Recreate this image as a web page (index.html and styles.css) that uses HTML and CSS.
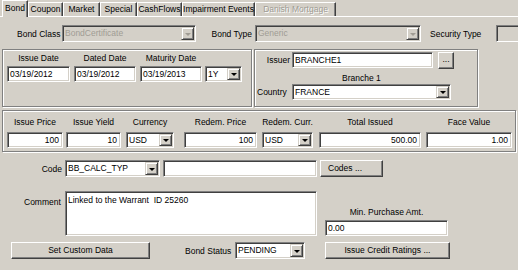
FILE: index.html
```html
<!DOCTYPE html>
<html>
<head>
  <link rel="stylesheet" href="styles.css">
</head>
<body>

<div class="tabs">
  <span class="tab active t-bond">Bond</span>
  <span class="tab t-coupon">Coupon</span>
  <span class="tab t-market">Market</span>
  <span class="tab t-special">Special</span>
  <span class="tab t-cash">CashFlows</span>
  <span class="tab t-impair">Impairment Events</span>
  <span class="tab off t-danish">Danish Mortgage</span>
</div>

<div class="page">

  <div class="row top-row">
    <span class="lbl lbl-bondclass">Bond Class</span>
    <div class="combo off f-bondclass"><span class="val">BondCertificate</span><span class="drop"></span></div>
    <span class="lbl lbl-bondtype">Bond Type</span>
    <div class="combo off f-bondtype"><span class="val">Generic</span><span class="drop"></span></div>
    <span class="lbl lbl-sectype">Security Type</span>
    <div class="box f-sectype"></div>
  </div>

  <div class="row groups">
    <div class="group g-dates">
      <div class="dates">
        <span class="cap">Issue Date</span>
        <span class="cap">Dated Date</span>
        <span class="cap">Maturity Date</span>
        <span></span>
        <div class="box"><span class="val">03/19/2012</span></div>
        <div class="box"><span class="val">03/19/2012</span></div>
        <div class="box"><span class="val">03/19/2013</span></div>
        <div class="combo"><span class="val">1Y</span><span class="drop"></span></div>
      </div>
    </div>

    <div class="group g-issuer">
      <div class="row issuer-row">
        <span class="lbl lbl-issuer">Issuer</span>
        <div class="box f-issuer"><span class="val">BRANCHE1</span></div>
        <span class="btn btn-dots">...</span>
      </div>
      <div class="branche">Branche 1</div>
      <div class="row country-row">
        <span class="lbl lbl-country">Country</span>
        <div class="combo f-country"><span class="val">FRANCE</span><span class="drop"></span></div>
      </div>
    </div>
  </div>

  <div class="group g-prices">
    <div class="col c-iprice"><span class="cap">Issue Price</span><div class="box num"><span class="val">100</span></div></div>
    <div class="col c-iyield"><span class="cap">Issue Yield</span><div class="box num"><span class="val">10</span></div></div>
    <div class="col c-ccy"><span class="cap">Currency</span><div class="combo"><span class="val">USD</span><span class="drop"></span></div></div>
    <div class="col c-rprice"><span class="cap">Redem. Price</span><div class="box num"><span class="val">100</span></div></div>
    <div class="col c-rccy"><span class="cap">Redem. Curr.</span><div class="combo"><span class="val">USD</span><span class="drop"></span></div></div>
    <div class="col c-total"><span class="cap">Total Issued</span><div class="box num"><span class="val">500.00</span></div></div>
    <div class="col c-face"><span class="cap">Face Value</span><div class="box num"><span class="val">1.00</span></div></div>
  </div>

  <div class="row code-row">
    <span class="lbl lbl-code">Code</span>
    <div class="combo f-code"><span class="val">BB_CALC_TYP</span><span class="drop"></span></div>
    <div class="box f-codetext"></div>
    <span class="btn btn-codes">Codes ...</span>
  </div>

  <div class="row comment-row">
    <span class="lbl lbl-comment">Comment</span>
    <div class="box memo"><span class="val">Linked to the Warrant&nbsp; ID 25260</span></div>
    <div class="minbuy">
      <span class="cap">Min. Purchase Amt.</span>
      <div class="box"><span class="val">0.00</span></div>
    </div>
  </div>

  <div class="row bottom-row">
    <span class="btn btn-custom">Set Custom Data</span>
    <span class="lbl lbl-status">Bond Status</span>
    <div class="combo f-status"><span class="val">PENDING</span><span class="drop"></span></div>
    <span class="btn btn-ratings">Issue Credit Ratings ...</span>
  </div>

</div>

</body>
</html>
```

FILE: styles.css
```css
* {
  box-sizing: border-box;
}
body {
  margin: 0;
  width: 518px;
  height: 270px;
  overflow: hidden;
  background: #d4d0c8;
  font-family: "Liberation Sans", Arial, sans-serif;
  font-size: 8.5px;
  color: #000;
}

/* tab strip */
.tabs {
  display: flex;
  align-items: flex-end;
  height: 16px;
  padding-left: 2px;
}
.tab {
  flex-shrink: 0;
  height: 14px;
  line-height: 12px;
  text-align: center;
  white-space: nowrap;
  border-top: 1px solid #fff;
  border-left: 1px solid #fff;
  border-right: 1px solid #404040;
  box-shadow: inset -1px 0 #808080;
}
.tab.active {
  height: 17px;
  line-height: 14px;
  margin-bottom: -1px;
  background: #d4d0c8;
  position: relative;
  z-index: 1;
}
.tab.off {
  color: #a09c94;
  text-shadow: 1px 1px 0 #fff;
}
.t-bond { width: 26px; }
.t-coupon { width: 35px; }
.t-market { width: 37px; }
.t-special { width: 37px; }
.t-cash { width: 45px; }
.t-impair { width: 73px; }
.t-danish { width: 81px; }

.page {
  border-top: 1px solid #fff;
  height: 254px;
}

.row {
  display: flex;
  align-items: center;
}
.row > * {
  flex-shrink: 0;
}
.lbl {
  white-space: nowrap;
}
.cap {
  display: block;
  height: 10px;
  line-height: 10px;
  text-align: center;
  white-space: nowrap;
}

/* sunken fields */
.box, .combo {
  height: 16px;
  background: #fff;
  border-top: 1px solid #808080;
  border-left: 1px solid #808080;
  border-bottom: 1px solid #fff;
  border-right: 1px solid #fff;
  box-shadow: inset 1px 1px #404040, inset -1px -1px #d4d0c8;
  overflow: hidden;
  white-space: nowrap;
}
.val {
  display: block;
  line-height: 14px;
  padding-left: 2px;
}
.num .val {
  text-align: right;
  padding-right: 3px;
}
.combo {
  display: flex;
  padding: 1px;
}
.combo .val {
  flex: 1;
  line-height: 12px;
  padding-left: 1px;
}
.drop {
  width: 13px;
  background: #d4d0c8;
  border-top: 1px solid #d4d0c8;
  border-left: 1px solid #d4d0c8;
  border-right: 1px solid #404040;
  border-bottom: 1px solid #404040;
  box-shadow: inset 1px 1px #fff, inset -1px -1px #808080;
  display: flex;
  align-items: center;
  justify-content: center;
}
.drop::after {
  content: "";
  border-left: 3px solid transparent;
  border-right: 3px solid transparent;
  border-top: 3px solid #000;
  margin-top: 1px;
}
.combo.off {
  background: #d4d0c8;
}
.combo.off .val {
  color: #a09c94;
}
.combo.off .drop::after {
  border-top-color: #a09c94;
}

/* raised buttons */
.btn {
  height: 17px;
  line-height: 15px;
  text-align: center;
  border-top: 1px solid #fff;
  border-left: 1px solid #fff;
  border-right: 1px solid #404040;
  border-bottom: 1px solid #404040;
  box-shadow: inset -1px -1px #808080;
  white-space: nowrap;
}

/* etched group boxes */
.group {
  border: 1px solid #808080;
  box-shadow: inset 1px 1px #fff, 1px 1px #fff;
}

/* row 1 */
.top-row {
  margin-top: 8px;
  height: 17px;
}
.lbl-bondclass { margin-left: 17px; width: 43px; text-align: right; }
.f-bondclass { margin-left: 2px; width: 134px; height: 17px; }
.lbl-bondtype { margin-left: 14px; width: 42px; text-align: right; }
.f-bondtype { margin-left: 3px; width: 166px; height: 17px; }
.lbl-sectype { margin-left: 9px; width: 53px; }
.f-sectype { margin-left: 13px; width: 30px; height: 17px; background: #d4d0c8; }

/* date + issuer groups */
.groups {
  margin-top: 7px;
  align-items: stretch;
  height: 58px;
}
.g-dates {
  margin-left: 2px;
  width: 250px;
  padding: 3px 0 0 4px;
}
.dates {
  display: grid;
  grid-template-columns: 63px 62px 62px 36px;
  column-gap: 4px;
  row-gap: 3px;
}
.dates .combo {
  margin-left: -1px;
}
.g-issuer {
  margin-left: 2px;
  width: 224px;
  padding-top: 2px;
}
.issuer-row {
  height: 16px;
}
.lbl-issuer { width: 35px; text-align: right; }
.f-issuer { margin-left: 2px; width: 141px; }
.btn-dots { margin-left: 5px; width: 16px; height: 17px; line-height: 12px; }
.branche {
  margin-top: 5px;
  height: 10px;
  line-height: 10px;
  padding-left: 87px;
}
.country-row {
  margin-top: 1px;
  height: 16px;
}
.lbl-country { margin-left: 2px; width: 35px; }
.f-country { width: 159px; }

/* price group */
.g-prices {
  display: flex;
  margin: 3px 0 0 2px;
  width: 514px;
  height: 42px;
  padding: 6px 0 0 4px;
}
.col {
  flex-shrink: 0;
}
.col .cap {
  margin-bottom: 5px;
}
.c-iprice { width: 56px; }
.c-iyield { margin-left: 3px; width: 55px; }
.c-ccy { margin-left: 5px; width: 48px; }
.c-rprice { margin-left: 10px; width: 73px; }
.c-rccy { margin-left: 5px; width: 51px; }
.c-total { margin-left: 6px; width: 102px; }
.c-face { margin-left: 5px; width: 86px; }

/* code */
.code-row {
  margin-top: 8px;
  height: 17px;
}
.lbl-code { width: 62px; text-align: right; }
.f-code { margin-left: 3px; width: 95px; height: 17px; }
.f-codetext { margin-left: 3px; width: 154px; height: 17px; }
.btn-codes { margin-left: 3px; width: 63px; text-align: left; padding-left: 7px; }

/* comment */
.comment-row {
  margin-top: 14px;
  height: 45px;
  align-items: flex-start;
}
.lbl-comment {
  margin: 6px 0 0 24px;
  width: 41px;
}
.memo {
  width: 252px;
  height: 45px;
}
.memo .val {
  padding-top: 1px;
}
.minbuy {
  margin: 16px 0 0 8px;
  width: 123px;
}
.minbuy .cap {
  margin-bottom: 3px;
}

/* bottom */
.bottom-row {
  margin-top: 6px;
  height: 17px;
}
.btn-custom { margin-left: 11px; width: 139px; }
.lbl-status { margin-left: 35px; width: 48px; }
.f-status { margin-left: 2px; width: 70px; height: 17px; }
.btn-ratings { margin-left: 20px; width: 125px; }
```
